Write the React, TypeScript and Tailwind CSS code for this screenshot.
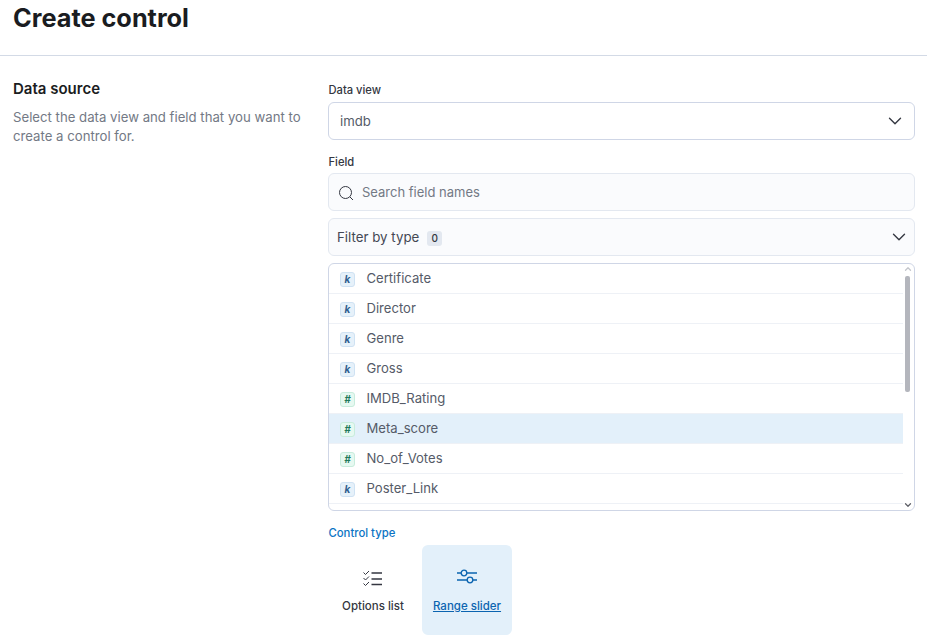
import { ChevronDown, ChevronUp } from "lucide-react";

const fields = [
	{ name: "Certificate", type: "k" },
	{ name: "Director", type: "k" },
	{ name: "Genre", type: "k" },
	{ name: "Gross", type: "k" },
	{ name: "IMDB_Rating", type: "n" },
	{ name: "Meta_score", type: "n", active: true },
	{ name: "No_of_Votes", type: "n" },
	{ name: "Poster_Link", type: "k" },
];

const FieldToken = ({ type }: { type: string }) => (
	<span
		className={`flex items-center justify-center w-[15px] h-[15px] rounded-[3px] border text-[10px] font-bold italic ${
			type === "k"
				? "bg-[#e6f1fa] border-[#cfe2f3] text-[#2f5f8f]"
				: "bg-[#e6f9f1] border-[#c8ecdc] text-[#1f7a5c]"
		}`}
	>
		{type === "k" ? "k" : "#"}
	</span>
);

const App = () => {
	return (
		<div className="w-[927px] h-[642px] overflow-hidden bg-white font-['Inter',sans-serif] text-[#1d2a3e]">
			<div className="h-[56px] border-b border-[#d3dae6] px-[13px]">
				<h1 className="text-[25.3px] leading-[36px] font-bold text-[#1a1c21]">
					Create control
				</h1>
			</div>
			<div className="flex px-[13px] pt-[24px]">
				<div className="w-[315px] shrink-0">
					<h2 className="text-[15px] leading-[18px] font-semibold text-[#1a1c21]">
						Data source
					</h2>
					<p className="mt-[10px] w-[295px] text-[13.2px] leading-[19px] text-[#737985]">
						Select the data view and field that you want to create a control
						for.
					</p>
				</div>
				<div className="w-[587px] shrink-0 flex flex-col">
					<label className="pl-[0.5px] text-[11.2px] leading-[20px] h-[22px] font-medium text-[#343741]">
						Data view
					</label>
					<div className="h-[38px] flex items-center justify-between pl-[11px] pr-[8px] border border-[#cfd6e6] rounded-[6px] bg-white">
						<span className="pt-[2px] text-[13.2px] text-[#555b68]">imdb</span>
						<ChevronDown size={22} strokeWidth={1.5} className="text-[#343741]" />
					</div>
					<label className="mt-[11px] pl-[0.5px] text-[11.2px] leading-[22px] h-[22px] font-medium text-[#343741]">
						Field
					</label>
					<div className="h-[38px] flex items-center gap-[7px] px-[10px] border border-[#e3e8f0] rounded-[6px] bg-[#fafbfd]">
						<svg width="16" height="16" viewBox="0 0 16 16" fill="none" stroke="#343741" strokeWidth="1" className="mt-[1px] -ml-[1px] mr-[1px]">
							<circle cx="7.5" cy="7.5" r="6" />
							<path d="M12 12l3 3" />
						</svg>
						<span className="pt-[2px] text-[13px] text-[#737985]">Search field names</span>
					</div>
					<div className="mt-[7px] h-[38px] flex items-center justify-between pl-[8px] pr-[4px] border border-[#e3e8f0] rounded-[6px] bg-[#fafbfd]">
						<div className="flex items-center gap-[8px] pt-[2px]">
							<span className="text-[13.3px] text-[#444854]">Filter by type</span>
							<span className="flex items-center justify-center w-[15px] h-[15px] rounded-[3px] bg-[#e3e8f0] text-[10px] font-medium text-[#343741]">
								0
							</span>
						</div>
						<ChevronDown size={22} strokeWidth={1.5} className="text-[#343741]" />
					</div>
					<div className="mt-[7px] h-[248px] flex border border-[#cfd6e6] rounded-[6px] overflow-hidden bg-white">
						<div className="flex-1 min-w-0">
							{fields.map((field) => (
								<div
									key={field.name}
									className={`h-[30px] flex items-center gap-[11.5px] pl-[11px] pt-[2px] border-b border-[#eef1f6] ${
										field.active ? "bg-[#e3f0fa]" : ""
									}`}
								>
									<FieldToken type={field.type} />
									<span className="-mt-[2px] text-[13.1px] text-[#555b68]">{field.name}</span>
								</div>
							))}
						</div>
						<div className="relative w-[11px] shrink-0">
							<ChevronUp size={10} strokeWidth={3} className="absolute top-0 left-0 text-[#c4c6cc]" />
							<div className="absolute top-[12px] left-[2px] w-[5px] h-[116px] rounded-[2px] bg-[#b4b6bd]" />
							<ChevronDown size={10} strokeWidth={3} className="absolute bottom-0 left-0 text-[#5f6168]" />
						</div>
					</div>
					<label className="mt-[11px] pl-[0.5px] text-[11.3px] leading-[22px] h-[23px] font-medium text-[#0b74c4]">
						Control type
					</label>
					<div className="flex gap-[4px]">
						<div className="w-[90px] h-[90px] flex flex-col items-center pt-[24px]">
							<svg width="20" height="20" viewBox="0 0 20 20" fill="none" stroke="#343741">
								<path d="M0.5 3.5l2 2L6 2M0.5 9l2 2L6 7.5M0.5 14.5l2 2L6 13" strokeWidth="1" />
								<path d="M8.5 4h10.5M8.5 10h10.5M8.5 15.5h10.5" strokeWidth="1.3" />
							</svg>
							<span className="mt-[10px] text-[11.5px] leading-[14px] font-medium text-[#343741]">
								Options list
							</span>
						</div>
						<div className="w-[90px] h-[90px] flex flex-col items-center pt-[23px] rounded-[6px] bg-[#e3f0fa]">
							<svg width="20" height="20" viewBox="0 0 20 20" fill="none" stroke="#0b64b0" strokeWidth="1.3">
								<path d="M0 5h4M10 5h10M0 12h10M16 12h4" />
								<circle cx="7" cy="5" r="2.8" />
								<circle cx="13" cy="12" r="2.8" />
							</svg>
							<span className="mt-[11px] text-[11.5px] leading-[14px] font-medium underline text-[#0b64b0]">
								Range slider
							</span>
						</div>
					</div>
				</div>
			</div>
		</div>
	);
};

export default App;
